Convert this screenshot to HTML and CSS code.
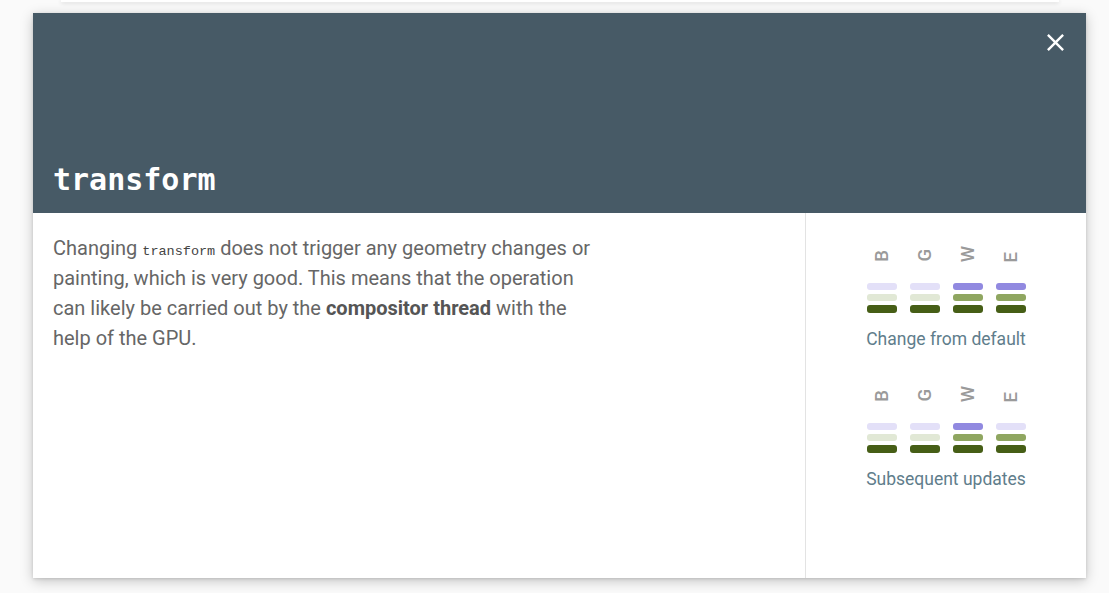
FILE: index.html
```html
<!DOCTYPE html>
<html>
<head>
<meta charset="utf-8">
<link rel="stylesheet" href="styles.css">
</head>
<body>
<div class="page">
  <div class="bg-card"></div>
</div>
<div class="modal">
  <div class="modal-header">
    <h1 class="title">transform</h1>
    <button class="close" aria-label="Close">
      <svg viewBox="0 0 24 24" width="29" height="29"><path fill="#fff" d="M19 6.41L17.590 5 12 10.59 6.41 5 5 6.41 10.59 12 5 17.59 6.41 19 12 13.41 17.59 19 19 17.59 13.41 12z"/></svg>
    </button>
  </div>
  <div class="modal-body">
    <div class="desc">
      <p>Changing <code>transform</code> does not trigger any geometry changes or painting, which is very good. This means that the operation can likely be carried out by the <strong>compositor thread</strong> with the help of the GPU.</p>
    </div>
    <div class="side">
      <div class="group">
        <div class="letters">
          <div class="letter"><span>B</span></div><div class="letter"><span>G</span></div><div class="letter"><span>W</span></div><div class="letter"><span>E</span></div>
        </div>
        <div class="bars">
          <div class="col"><i class="b lav-l"></i><i class="b grn-l"></i><i class="b grn-d"></i></div>
          <div class="col"><i class="b lav-l"></i><i class="b grn-l"></i><i class="b grn-d"></i></div>
          <div class="col"><i class="b lav-d"></i><i class="b grn-m"></i><i class="b grn-d"></i></div>
          <div class="col"><i class="b lav-d"></i><i class="b grn-m"></i><i class="b grn-d"></i></div>
        </div>
        <div class="label">Change from default</div>
      </div>
      <div class="group">
        <div class="letters">
          <div class="letter"><span>B</span></div><div class="letter"><span>G</span></div><div class="letter"><span>W</span></div><div class="letter"><span>E</span></div>
        </div>
        <div class="bars">
          <div class="col"><i class="b lav-l"></i><i class="b grn-l"></i><i class="b grn-d"></i></div>
          <div class="col"><i class="b lav-l"></i><i class="b grn-l"></i><i class="b grn-d"></i></div>
          <div class="col"><i class="b lav-d"></i><i class="b grn-m"></i><i class="b grn-d"></i></div>
          <div class="col"><i class="b lav-l"></i><i class="b grn-m"></i><i class="b grn-d"></i></div>
        </div>
        <div class="label">Subsequent updates</div>
      </div>
    </div>
  </div>
</div>
</body>
</html>
```
FILE: styles.css
```css
* { box-sizing: border-box; }
html, body { margin: 0; padding: 0; }
body {
  background: #fafafa;
  width: 1109px;
  height: 593px;
  overflow: hidden;
  font-family: Roboto, "Liberation Sans", sans-serif;
  position: relative;
}
.page { padding: 0 50px 0 61px; }
.bg-card {
  width: 998px;
  height: 2px;
  background: #fff;
  box-shadow: 0 1px 4px rgba(0,0,0,0.18);
}
.modal {
  position: absolute;
  left: 33px;
  top: 13px;
  width: 1053px;
  height: 565px;
  background: #fff;
  display: flex;
  flex-direction: column;
  box-shadow: 0 3px 12px rgba(0,0,0,0.22), 0 1px 3px rgba(0,0,0,0.12);
}
.modal-header {
  position: relative;
  height: 200px;
  flex: none;
  background: #475a66;
  display: flex;
  align-items: flex-end;
  padding: 0 20px 18px;
}
.title {
  margin: 0;
  color: #fff;
  font-family: "DejaVu Sans Mono", "Liberation Mono", monospace;
  font-weight: bold;
  font-size: 30px;
  line-height: 30px;
}
.close {
  position: absolute;
  top: 15px;
  right: 16px;
  width: 29px;
  height: 29px;
  padding: 0;
  border: 0;
  background: none;
  display: flex;
}
.modal-body {
  flex: 1;
  display: flex;
}
.desc {
  flex: 1;
  padding: 20px 20px;
  border-right: 1px solid #e3e3e3;
}
.desc p {
  margin: 0;
  max-width: 545px;
  font-size: 20px;
  line-height: 30px;
  color: #666;
}
.desc code {
  font-family: "Liberation Mono", monospace;
  font-size: 13.5px;
  line-height: 1;
  color: #444;
}
.desc strong { font-weight: bold; color: #555; }
.side {
  width: 280px;
  flex: none;
  display: flex;
  flex-direction: column;
  align-items: center;
  padding-top: 29px;
  gap: 32px;
}
.group {
  display: flex;
  flex-direction: column;
  align-items: center;
}
.letters {
  display: flex;
  gap: 13px;
  height: 20px;
}
.letter {
  width: 30px;
  height: 20px;
  display: flex;
  justify-content: center;
  align-items: flex-end;
}
.letter span {
  display: block;
  writing-mode: vertical-rl;
  transform: rotate(180deg);
  font-size: 18.5px;
  line-height: 16px;
  font-weight: 500;
  color: #9a9a9a;
}
.bars {
  display: flex;
  gap: 13px;
  margin-top: 21px;
}
.col {
  width: 30px;
  display: flex;
  flex-direction: column;
  gap: 4px;
}
.b {
  display: block;
  height: 7px;
  border-radius: 3px;
}
.b.grn-d { height: 8px; }
.lav-l { background: #e3e0f8; }
.lav-d { background: #9189e0; }
.grn-l { background: #e1e8d5; }
.grn-m { background: #8fa660; }
.grn-d { background: #465e16; }
.label {
  margin-top: 15px;
  font-size: 17.5px;
  line-height: 22px;
  color: #607d8b;
}
```
